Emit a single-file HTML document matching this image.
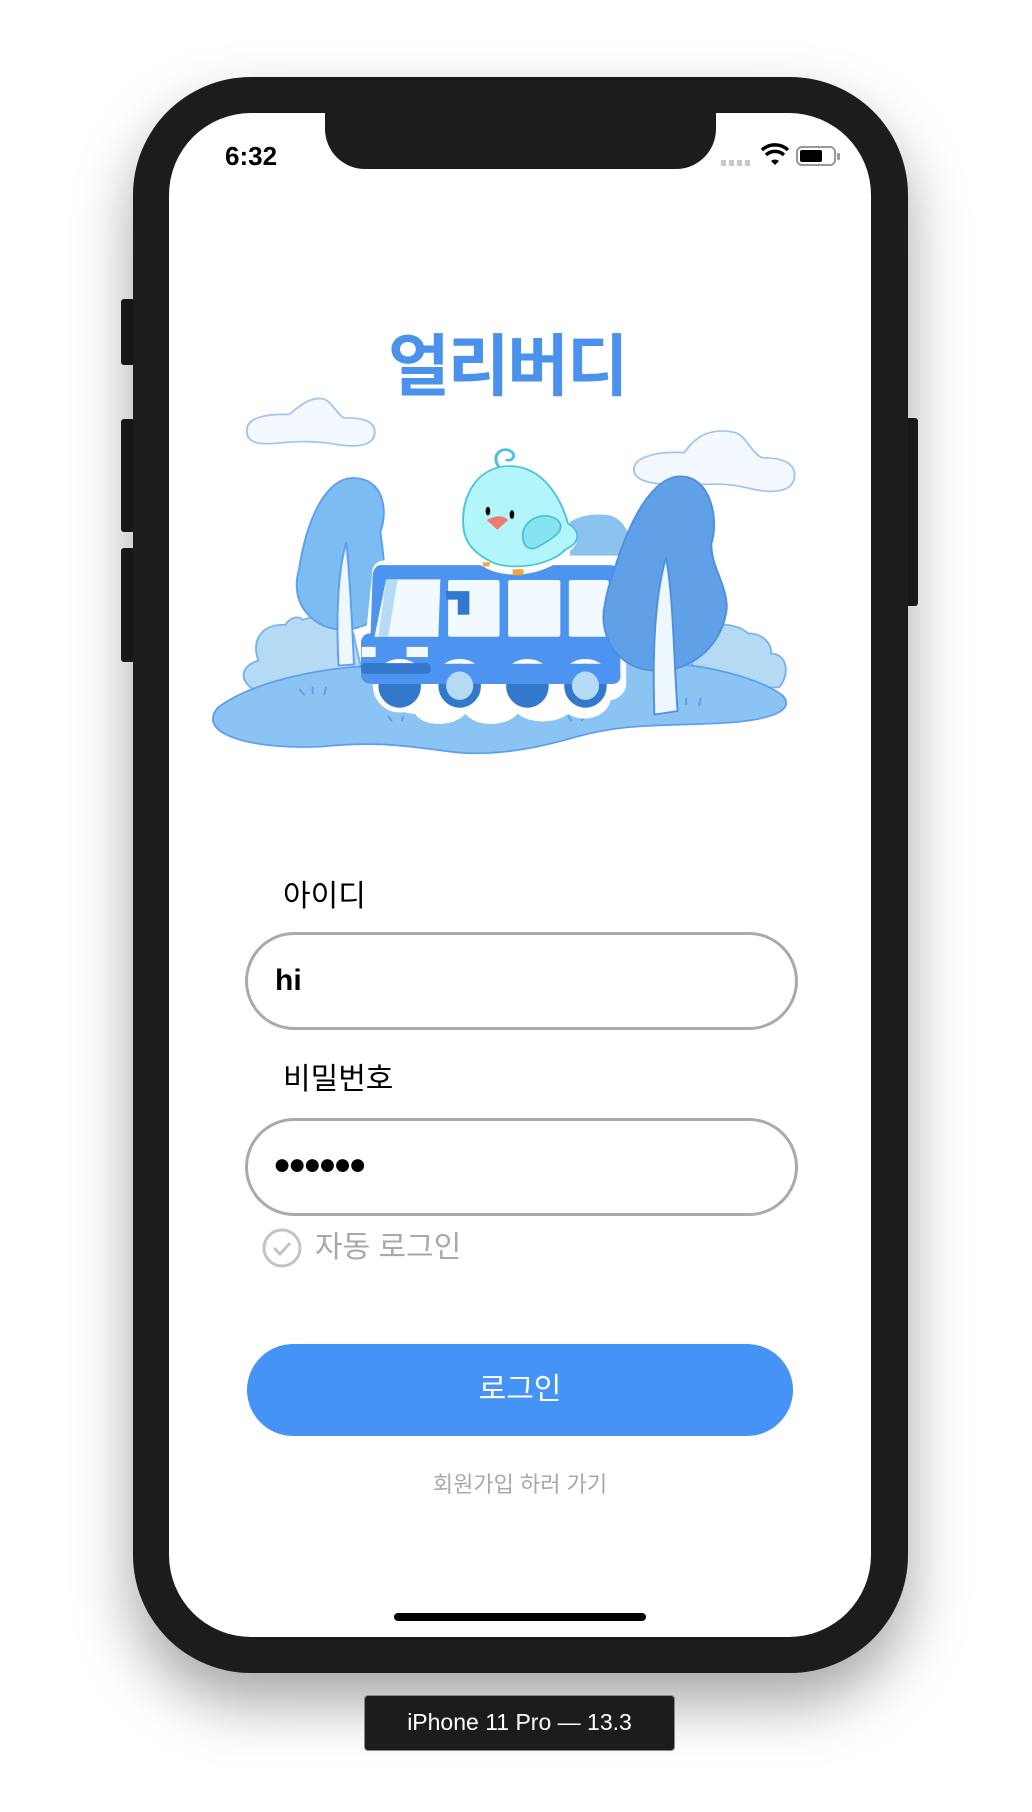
<!DOCTYPE html>
<html><head><meta charset="utf-8"><style>
*{margin:0;padding:0;box-sizing:border-box}
body{width:1032px;height:1812px;background:#fff;position:relative;overflow:hidden;font-family:"Liberation Sans","Noto Sans CJK KR",sans-serif}
.abs{position:absolute}
.phone{left:133px;top:77px;width:775px;height:1596px;background:#1c1c1c;border-radius:118px;box-shadow:0 30px 60px rgba(0,0,0,.35)}
.screen{left:169px;top:113px;width:702px;height:1524px;background:#fff;border-radius:82px;overflow:hidden}
.btn{background:#1c1c1c;border-radius:3px}
.t{white-space:nowrap;line-height:1}
</style></head><body>
<div class="abs btn" style="left:121px;top:299px;width:14px;height:66px"></div>
<div class="abs btn" style="left:121px;top:419px;width:14px;height:113px"></div>
<div class="abs btn" style="left:121px;top:548px;width:14px;height:114px"></div>
<div class="abs btn" style="left:905px;top:418px;width:13px;height:188px"></div>
<div class="abs phone"></div>
<div class="abs screen">
  <div class="abs" style="left:156px;top:-10px;width:391px;height:66px;background:#1c1c1c;border-radius:0 0 40px 40px"></div>
</div>
<div class="abs t" style="left:225px;top:143px;font-size:26px;font-weight:bold;color:#000">6:32</div>
<div class="abs" style="left:721px;top:160px;width:29px;height:6px;background:repeating-linear-gradient(90deg,#c8c8c8 0 5px,transparent 5px 8px)"></div>
<svg class="abs" style="left:760px;top:143px" width="30" height="24" viewBox="0 0 30 24"><path d="M15 22l-4-4a6 6 0 0 1 8 0z" fill="#000"/><path d="M6 12a13 13 0 0 1 18 0" stroke="#000" stroke-width="3.5" fill="none"/><path d="M2 7a19 19 0 0 1 26 0" stroke="#000" stroke-width="3.5" fill="none"/></svg>
<div class="abs" style="left:796px;top:146px;width:40px;height:20px;border:2px solid #999;border-radius:6px"></div>
<div class="abs" style="left:800px;top:150px;width:22px;height:12px;background:#000;border-radius:2px"></div>
<div class="abs" style="left:837px;top:153px;width:3px;height:7px;background:#999;border-radius:1px"></div>

<div class="abs t" style="left:388px;top:328px;font-size:60px;font-weight:bold;color:#4a92ec;transform:scale(1.12,1.13);transform-origin:top left;font-family:'Noto Sans CJK KR',sans-serif;letter-spacing:-2px">얼리버디</div>

<svg class="abs" style="left:210px;top:380px" width="600" height="400" viewBox="0 0 1550 1184" preserveAspectRatio="none">
<path d="M95 150c0-40 50-50 110-48 30-30 60-55 90-45 20 8 30 40 50 55 40 0 75 5 80 35 5 40-30 55-90 45-60-12-100-12-160-5-50 5-80 0-80-37z" fill="#f3f9fe" stroke="#9fc6f0" stroke-width="5"/>
<path d="M1095 265c0-40 70-55 130-50 30-50 70-75 130-60 30 10 40 55 70 75 60 0 85 20 85 50 0 50-50 60-120 40-70-20-120-8-190-10-70-2-105-15-105-45z" fill="#f3f9fe" stroke="#9fc6f0" stroke-width="5"/>
<path d="M930 420c30-20 60-25 100-20 40 10 60 60 60 120l-160 0z" fill="#8cc3ee"/>
<path d="M125 830c-20-60 10-110 70-105 10-20 30-30 45-15 40-20 100 0 130 40l30 150-280 20c-40-20-50-70 5-90z" fill="#b4dbf3" stroke="#7ab2ee" stroke-width="5"/>
<path d="M1250 760c30-40 100-50 140-10 40 0 60 30 60 60 40 0 50 60 20 100l-230 0z" fill="#b4dbf3" stroke="#7ab2ee" stroke-width="5"/>
<path d="M20 970c80-70 250-120 420-125 250-10 500-20 720-10 150 10 280 60 320 100 30 40-20 70-150 80-160 10-250 0-380 40-120 40-230 60-330 45-130-20-200-30-330-15-160 10-330-30-270-115z" fill="#8bc4f2" stroke="#5c9ef0" stroke-width="5"/>
<path d="M230 560c20-150 70-270 140-270 80 0 90 100 70 160 10 80 20 180 0 240-40 60-140 70-190 0-30-40-30-90-20-130z" fill="#7dbcf2" stroke="#5c9ef0" stroke-width="5"/>
<path d="M352 480c-25 100-25 250-20 365l40-3c-5-120-10-260-20-362z" fill="#eef6fe" stroke="#5c9ef0" stroke-width="5"/>
<g stroke="#5c9ef0" stroke-width="5" fill="none"><path d="M230 915l15 18M265 908v22M300 908l-5 25M460 995l10 15M500 995l-5 15M720 940l10 15M755 940l-5 15M925 995l10 15M965 995l-5 15M1230 940v22M1268 940l-5 25"/></g>
<path d="M375 760c0-30 20-30 30-30l15-170c5-20 20-27 40-27h580c25 0 35 15 35 35v330c0 30-20 45-40 50-10 50-70 70-110 40-30 30-100 30-130 0-30 40-110 40-135 0-30 40-110 40-130 0-40 0-70-30-75-60-40-10-40-40-40-60z" fill="#fff"/>
<path d="M440 548h590c20 0 30 10 30 30v300c0 15-10 22-25 22h-610c-25 0-35-10-35-30v-90c0-20 10-30 25-30l5-170c2-20 10-32 20-32z" fill="#4d94f0"/>
<path d="M455 590h140l-5 170h-165z" fill="#f2f9ff"/><path d="M455 590h30l-25 170h-25z" fill="#b6dbf6"/>
<rect x="615" y="592" width="133" height="168" rx="6" fill="#f2f9ff"/><rect x="770" y="592" width="135" height="168" rx="6" fill="#f2f9ff"/><rect x="927" y="592" width="103" height="168" rx="6" fill="#f2f9ff"/>
<path d="M610 625h60v70h-30v-45h-30z" fill="#2f7ad0"/>
<rect x="390" y="838" width="180" height="32" rx="12" fill="#3478cc"/>
<rect x="392" y="790" width="36" height="30" fill="#f2f9ff"/><rect x="508" y="790" width="55" height="30" fill="#f2f9ff"/>
<g stroke="#fff" stroke-width="14"><ellipse cx="490" cy="905" rx="62" ry="72" fill="#3478cc"/><ellipse cx="645" cy="905" rx="62" ry="72" fill="#3478cc"/><ellipse cx="820" cy="905" rx="62" ry="72" fill="#3478cc"/><ellipse cx="970" cy="905" rx="62" ry="72" fill="#3478cc"/></g>
<path d="M440 840h590c20 0 30 10 30 30v8c0 15-10 22-25 22h-610c-25 0-35-10-35-30v-30z" fill="#4d94f0"/>
<rect x="390" y="838" width="180" height="32" rx="12" fill="#3478cc"/>
<ellipse cx="645" cy="905" rx="35" ry="42" fill="#b4dbf3"/><ellipse cx="970" cy="905" rx="35" ry="42" fill="#b4dbf3"/>
<path d="M1045 560c40-150 100-275 170-275 80 0 100 130 80 200 0 70 40 120 40 190-10 120-110 210-220 180-80-25-110-120-95-190 5-40 15-70 25-105z" fill="#60a0e6" stroke="#4f8fe0" stroke-width="5"/>
<path d="M1178 525c-30 120-35 300-30 465l60-10c-10-150-10-330-30-455z" fill="#eef6fe" stroke="#4f8fe0" stroke-width="5"/>
<path d="M640 440c0-120 60-190 100-195-20-50 20-80 45-45 10 20 0 40-5 45 80 20 120 100 140 180 40 20 40 60 0 90-40 60-150 80-210 40-50-30-80-70-70-115z" fill="#fff"/>
<path d="M655 440c-10-100 40-190 125-185 80 5 125 90 145 170 30 20 35 55-5 75-40 50-140 65-190 40-45-25-70-55-75-100z" fill="#b2f6fb" stroke="#4cc3da" stroke-width="5"/>
<path d="M748 260c-25-35 5-65 28-50 20 15 0 35-12 25" fill="none" stroke="#4cc3da" stroke-width="8"/>
<ellipse cx="718" cy="388" rx="6" ry="13" fill="#000"/><ellipse cx="780" cy="398" rx="6" ry="13" fill="#000"/>
<path d="M715 415c20-15 45-15 55 0l-28 28z" fill="#ee7a70"/>
<path d="M808 460c0-50 60-75 90-45 25 30-15 55-45 75-25 20-45 5-45-30z" fill="#88e3f0" stroke="#4cc3da" stroke-width="5"/>
<path d="M705 540h20l-5 12h-15zM782 560h28v18h-28z" fill="#f0a830"/>
</svg>

<div class="abs t" style="left:283px;top:882px;font-size:30px;color:#000">아이디</div>
<div class="abs" style="left:245px;top:932px;width:553px;height:98px;border:3px solid #aaa;border-radius:49px"></div>
<div class="abs t" style="left:275px;top:966px;font-size:30px;font-weight:bold;color:#000">hi</div>
<div class="abs t" style="left:283px;top:1065px;font-size:30px;color:#000">비밀번호</div>
<div class="abs" style="left:245px;top:1118px;width:553px;height:98px;border:3px solid #aaa;border-radius:49px"></div>
<div class="abs t" style="left:273px;top:1150px;font-size:30px;color:#000;letter-spacing:-3px">●●●●●●</div>
<svg class="abs" style="left:262px;top:1228px" width="40" height="40" viewBox="0 0 40 40"><circle cx="20" cy="20" r="18" fill="none" stroke="#c4c4c4" stroke-width="3"/><path d="M12 20l6 6 10-11" fill="none" stroke="#c4c4c4" stroke-width="3"/></svg>
<div class="abs t" style="left:315px;top:1233px;font-size:30px;color:#a8a8a8">자동 로그인</div>
<div class="abs" style="left:247px;top:1344px;width:546px;height:92px;background:#4493f5;border-radius:46px"></div>
<div class="abs t" style="left:247px;top:1375px;width:546px;text-align:center;font-size:30px;color:#fff">로그인</div>
<div class="abs t" style="left:247px;top:1474px;width:546px;text-align:center;font-size:22px;color:#a8a8a8">회원가입 하러 가기</div>
<div class="abs" style="left:394px;top:1613px;width:252px;height:8px;background:#000;border-radius:4px"></div>
<div class="abs" style="left:364px;top:1695px;width:311px;height:56px;background:#1c1c1c;border:1px solid #888;border-radius:4px"></div>
<div class="abs t" style="left:364px;top:1711px;width:311px;text-align:center;font-size:23px;color:#fff">iPhone 11 Pro — 13.3</div>
</body></html>
